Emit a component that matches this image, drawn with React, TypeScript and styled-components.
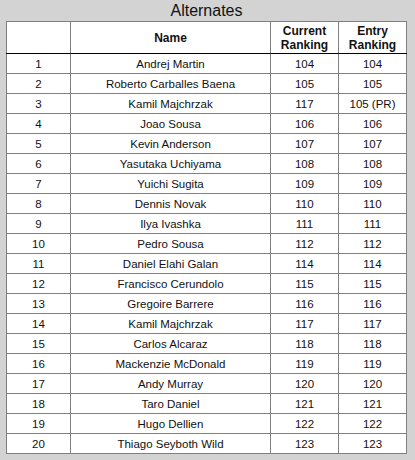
import React from "react";
import styled, { createGlobalStyle } from "styled-components";

const Global = createGlobalStyle`
  html, body { margin: 0; padding: 0; background: #d3d3d3; }
  body { font-family: "Liberation Sans", Arial, sans-serif; color: #000; }
`;

const Wrap = styled.div`
  width: 401px;
  margin-left: 6px;
`;

const Title = styled.div`
  height: 19px;
  padding-top: 2px;
  line-height: 18px;
  font-size: 16px;
  text-align: center;
  color: #111;
`;

const Table = styled.table`
  width: 401px;
  table-layout: fixed;
  border-collapse: collapse;
  background: #fff;
  border: 1px solid #808080;
`;

const HeadCell = styled.th`
  border: 1px solid #808080;
  border-bottom: 1px solid #000;
  height: 31px;
  padding: 0;
  font-size: 12px;
  font-weight: bold;
  line-height: 14px;
  text-align: center;
  vertical-align: middle;
  color: #111;
`;

const Cell = styled.td`
  border: 1px solid #808080;
  height: 19px;
  padding: 0;
  font-size: 11.5px;
  line-height: 14px;
  text-align: center;
  vertical-align: middle;
  color: #111;
  white-space: nowrap;
`;

type Row = [string, number, string];

const rows: Row[] = [
  ["Andrej Martin", 104, "104"],
  ["Roberto Carballes Baena", 105, "105"],
  ["Kamil Majchrzak", 117, "105 (PR)"],
  ["Joao Sousa", 106, "106"],
  ["Kevin Anderson", 107, "107"],
  ["Yasutaka Uchiyama", 108, "108"],
  ["Yuichi Sugita", 109, "109"],
  ["Dennis Novak", 110, "110"],
  ["Ilya Ivashka", 111, "111"],
  ["Pedro Sousa", 112, "112"],
  ["Daniel Elahi Galan", 114, "114"],
  ["Francisco Cerundolo", 115, "115"],
  ["Gregoire Barrere", 116, "116"],
  ["Kamil Majchrzak", 117, "117"],
  ["Carlos Alcaraz", 118, "118"],
  ["Mackenzie McDonald", 119, "119"],
  ["Andy Murray", 120, "120"],
  ["Taro Daniel", 121, "121"],
  ["Hugo Dellien", 122, "122"],
  ["Thiago Seyboth Wild", 123, "123"],
];

export default function App() {
  return (
    <>
      <Global />
      <Wrap>
        <Title>Alternates</Title>
        <Table>
          <colgroup>
            <col style={{ width: 64 }} />
            <col style={{ width: 200 }} />
            <col style={{ width: 68 }} />
            <col style={{ width: 68 }} />
          </colgroup>
          <thead>
            <tr>
              <HeadCell></HeadCell>
              <HeadCell>Name</HeadCell>
              <HeadCell>Current<br />Ranking</HeadCell>
              <HeadCell>Entry<br />Ranking</HeadCell>
            </tr>
          </thead>
          <tbody>
            {rows.map((r, i) => (
              <tr key={i}>
                <Cell>{i + 1}</Cell>
                <Cell>{r[0]}</Cell>
                <Cell>{r[1]}</Cell>
                <Cell>{r[2]}</Cell>
              </tr>
            ))}
          </tbody>
        </Table>
      </Wrap>
    </>
  );
}
